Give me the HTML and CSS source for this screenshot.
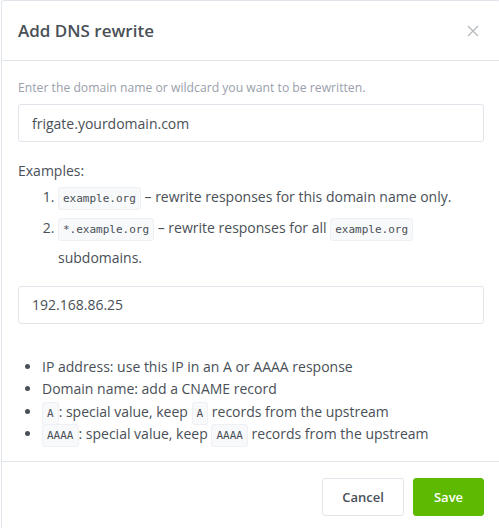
FILE: index.html
```html
<!DOCTYPE html>
<html>
<head>
<meta charset="utf-8">
<link rel="stylesheet" href="styles.css">
</head>
<body>
<div class="modal">
  <div class="modal-header">
    <h4 class="modal-title">Add DNS rewrite</h4>
    <button class="close" aria-label="Close">
      <svg width="12" height="12" viewBox="0 0 12 12"><path d="M1 1L11 11M11 1L1 11" stroke="#b4b8bf" stroke-width="1.3" fill="none"/></svg>
    </button>
  </div>
  <div class="modal-body">
    <div class="muted">Enter the domain name or wildcard you want to be rewritten.</div>
    <div class="input">frigate.yourdomain.com</div>
    <div class="examples">Examples:</div>
    <ol class="ex-list">
      <li><code>example.org</code> – rewrite responses for this domain name only.</li>
      <li><code>*.example.org</code> – rewrite responses for all <code>example.org</code> subdomains.</li>
    </ol>
    <div class="input input2">192.168.86.25</div>
    <ul class="info">
      <li>IP address: use this IP in an A or AAAA response</li>
      <li>Domain name: add a CNAME record</li>
      <li><code>A</code>: special value, keep <code>A</code> records from the upstream</li>
      <li><code>AAAA</code>: special value, keep <code>AAAA</code> records from the upstream</li>
    </ul>
  </div>
  <div class="modal-footer">
    <button class="btn btn-secondary">Cancel</button>
    <button class="btn btn-success">Save</button>
  </div>
</div>
</body>
</html>
```
FILE: styles.css
```css
html, body {
  margin: 0;
  padding: 0;
  background: #fff;
}
body {
  font-family: "Open Sans", "Noto Sans", sans-serif;
  color: #495057;
  font-size: 14px;
  overflow: hidden;
}
.modal {
  margin-left: 1px;
  width: 500px;
  border: 1px solid #e0e5ec;
  border-radius: 3px;
  box-sizing: border-box;
  background: #fff;
}
.modal-header {
  height: 59px;
  padding: 0 16px;
  display: flex;
  align-items: center;
  justify-content: space-between;
  border-bottom: 1px solid #e0e5ec;
}
.modal-title {
  margin: 0;
  font-size: 17px;
  font-weight: 600;
  color: #495057;
}
.close {
  border: 0;
  background: none;
  padding: 0;
  margin-right: 5px;
  display: flex;
}
.modal-body {
  padding: 17px 16px 15px;
}
.muted {
  font-size: 12.2px;
  line-height: 20px;
  color: #9aa0ac;
}
.input {
  margin-top: 6px;
  height: 38px;
  box-sizing: border-box;
  border: 1px solid #e0e5ec;
  border-radius: 3px;
  padding: 0 13px;
  display: flex;
  align-items: center;
  font-size: 14px;
  color: #495057;
}
.examples {
  margin-top: 18px;
  line-height: 21px;
}
.ex-list {
  margin: 1px 0 0;
  padding-left: 40px;
  line-height: 30.5px;
}
code {
  font-family: "DejaVu Sans Mono", "Liberation Mono", monospace;
  font-size: 11px;
  line-height: 1;
  background: #f8f9fa;
  border: 1px solid #eef0f3;
  border-radius: 3px;
  padding: 4px 4px;
  color: #495057;
}
.input2 {
  margin-top: 12px;
}
.info {
  margin: 32px 0 0;
  padding-left: 24px;
  line-height: 22.5px;
}
.modal-footer {
  border-top: 1px solid #e0e5ec;
  padding: 16px 16px 30px;
  display: flex;
  justify-content: flex-end;
  gap: 9px;
}
.btn {
  height: 38px;
  border-radius: 3px;
  font-family: inherit;
  font-size: 13px;
  font-weight: 600;
  cursor: pointer;
}
.btn-secondary {
  width: 82px;
  background: #fff;
  border: 1px solid #e0e5ec;
  color: #495057;
}
.btn-success {
  width: 71px;
  background: #5eba00;
  border: 1px solid #5eba00;
  color: #fff;
}
```
